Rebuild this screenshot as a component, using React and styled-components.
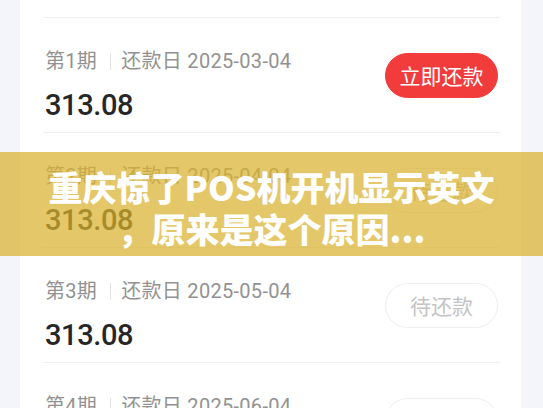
import React from 'react';
import styled, { createGlobalStyle } from 'styled-components';

const GlobalStyle = createGlobalStyle`
	html, body {
		margin: 0;
		padding: 0;
		background: #f4f4fb;
	}
	* {
		box-sizing: border-box;
	}
`;

const Screen = styled.div`
	position: relative;
	width: 543px;
	height: 408px;
	overflow: hidden;
	display: flex;
	padding: 0 22px 0 20px;
	background: #f4f4fb;
	font-family: "Roboto", "Noto Sans CJK SC", sans-serif;
`;

const Card = styled.div`
	flex: 1;
	background: #fff;
	padding: 0 21px 0 23px;
`;

const List = styled.div`
	display: flex;
	flex-direction: column;
	margin-top: -97px;
`;

const Row = styled.div`
	height: 115px;
	display: flex;
	justify-content: space-between;
	align-items: center;
	border-bottom: 1px solid #f0f0f3;
	padding-left: 2px;
`;

const Info = styled.div`
	align-self: flex-start;
	padding-top: 31px;
	display: flex;
	flex-direction: column;
`;

const Label = styled.div`
	display: flex;
	align-items: center;
	font-size: 20px;
	line-height: 24px;
	color: #929292;
	letter-spacing: 0.3px;
`;

const Sep = styled.span`
	width: 1px;
	height: 17px;
	background: #e2e2e2;
	margin: 0 10px 0 13px;
`;

const Amount = styled.div`
	margin-top: 14px;
	font-size: 29px;
	line-height: 36px;
	font-weight: 500;
	letter-spacing: -0.4px;
	color: #262626;
`;

const PayButton = styled.div`
	width: 113px;
	height: 45px;
	border-radius: 23px;
	display: flex;
	align-items: center;
	justify-content: center;
	font-size: 21px;
	font-family: "Noto Sans CJK SC", sans-serif;
	background: ${(p) => (p.$due ? '#f23b3b' : '#fff')};
	color: ${(p) => (p.$due ? '#fff' : '#c4c4c4')};
	border: 1px solid ${(p) => (p.$due ? '#f23b3b' : '#eeeeee')};
	margin-right: 2px;
`;

const Banner = styled.div`
	position: absolute;
	left: 0;
	right: 0;
	top: 152px;
	height: 104px;
	background: rgba(218, 178, 46, 0.72);
	display: flex;
	flex-direction: column;
	align-items: center;
	justify-content: center;
	padding-top: 8px;
	color: #fff;
	font-family: "Noto Sans CJK SC", sans-serif;
	font-weight: 900;
	font-size: 34px;
	line-height: 42px;
	text-align: center;
`;

const rows = [
	{ n: 0, date: '2025-02-04', due: false },
	{ n: 1, date: '2025-03-04', due: true },
	{ n: 2, date: '2025-04-04', due: false },
	{ n: 3, date: '2025-05-04', due: false },
	{ n: 4, date: '2025-06-04', due: false },
];

const App = () => {
	return (
		<>
			<GlobalStyle />
			<Screen>
				<Card>
					<List>
						{rows.map((r) => (
							<Row key={r.n}>
								<Info>
									<Label>
										第{r.n}期<Sep />还款日 {r.date}
									</Label>
									<Amount>313.08</Amount>
								</Info>
								<PayButton $due={r.due}>{r.due ? '立即还款' : '待还款'}</PayButton>
							</Row>
						))}
					</List>
				</Card>
				<Banner>
					<div>重庆惊了POS机开机显示英文</div>
					<div>，原来是这个原因...</div>
				</Banner>
			</Screen>
		</>
	);
};

export default App;
